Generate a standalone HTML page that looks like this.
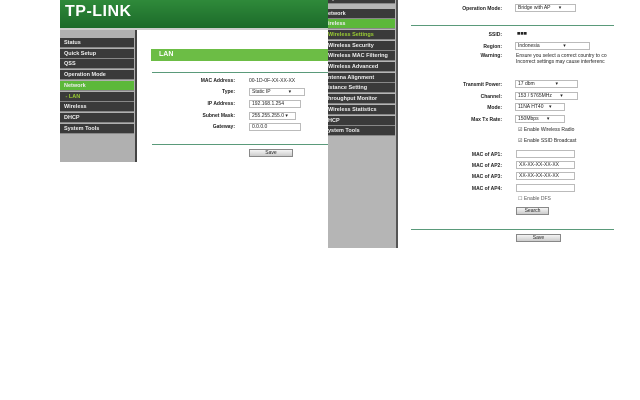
<!DOCTYPE html>
<html><head><style>
*{margin:0;padding:0;box-sizing:border-box}
body{width:640px;height:400px;background:#fff;position:relative;overflow:hidden;font-family:"Liberation Sans",sans-serif;font-size:5.5px;color:#222}
.a{position:absolute}
.mi{position:absolute;left:0;height:10px;background:#3a3a3a;color:#eee;font-weight:bold;padding-left:4px;line-height:10px;border-bottom:1px solid #888;font-size:5.5px}
.lb{position:absolute;text-align:right;font-weight:bold;font-size:5px}
.fd{position:absolute;height:8px;border:1px solid #bbb;background:#fff;font-size:5px;line-height:6px;padding-left:2px}
.btn{position:absolute;height:8px;border:1px solid #888;background:linear-gradient(#f4f4f4,#ccc);font-size:5px;text-align:center;line-height:6px}
.hl{position:absolute;height:1px;background:#5a9a7a}
</style></head><body>
<!-- left screenshot -->
<div class="a" style="left:60px;top:0;width:270px;height:28px;background:linear-gradient(#2f8a3a,#1c6a2a)"></div>
<div class="a" style="left:65px;top:3px;color:#fff;font-weight:900;font-size:16px;letter-spacing:0.5px">TP-LINK</div>
<div class="a" style="left:60px;top:28px;width:270px;height:2px;background:#ccc"></div>
<div class="a" style="left:60px;top:30px;width:75px;height:132px;background:#b0b0b0"></div>
<div class="a" style="left:135px;top:30px;width:2px;height:132px;background:#444"></div>
<div class="a" style="left:60px;top:38px;width:75px;height:100px">
<div class="mi" style="top:0;width:74px">Status</div>
<div class="mi" style="top:10.7px;width:74px">Quick Setup</div>
<div class="mi" style="top:21.4px;width:74px">QSS</div>
<div class="mi" style="top:32.1px;width:74px">Operation Mode</div>
<div class="mi" style="top:42.8px;width:74px;background:#5cb83a">Network</div>
<div class="mi" style="top:53.5px;width:74px;color:#9c3">&nbsp;- LAN</div>
<div class="mi" style="top:64.2px;width:74px">Wireless</div>
<div class="mi" style="top:74.9px;width:74px">DHCP</div>
<div class="mi" style="top:85.6px;width:74px">System Tools</div>
</div>
<div class="a" style="left:151px;top:49px;width:179px;height:12px;background:#6cbd45;color:#fff;font-weight:bold;font-size:7px;line-height:12px;padding-left:8px">LAN</div>
<div class="hl" style="left:152px;top:72px;width:178px"></div>
<div class="lb" style="left:160px;top:78px;width:75px">MAC Address:</div>
<div class="a" style="left:249px;top:78px;font-size:5px">00-1D-0F-XX-XX-XX</div>
<div class="lb" style="left:160px;top:89px;width:75px">Type:</div>
<div class="fd" style="left:249px;top:88px;width:56px">Static IP &nbsp;&nbsp;&nbsp;&nbsp;&nbsp;&nbsp;&nbsp;&nbsp;&nbsp;&nbsp;&nbsp;&nbsp;▾</div>
<div class="lb" style="left:160px;top:101px;width:75px">IP Address:</div>
<div class="fd" style="left:249px;top:100px;width:52px">192.168.1.254</div>
<div class="lb" style="left:160px;top:113px;width:75px">Subnet Mask:</div>
<div class="fd" style="left:249px;top:112px;width:47px">255.255.255.0 ▾</div>
<div class="lb" style="left:160px;top:124px;width:75px">Gateway:</div>
<div class="fd" style="left:249px;top:123px;width:52px">0.0.0.0</div>
<div class="hl" style="left:152px;top:144px;width:178px"></div>
<div class="btn" style="left:249px;top:149px;width:44px">Save</div>
<!-- right screenshot -->
<div class="a" style="left:328px;top:0;width:68px;height:248px;background:#b5b5b5"></div>
<div class="a" style="left:396px;top:0;width:2px;height:248px;background:#555"></div>
<div class="a" style="left:328px;top:-2px;width:67px;height:140px">
<div class="mi" style="top:-4px;width:67px;padding-left:0">Operation Mode</div>
<div class="mi" style="top:10.5px;width:67px;padding-left:0">etwork</div>
<div class="mi" style="top:21.2px;width:67px;padding-left:0;background:#5cb83a">ireless</div>
<div class="mi" style="top:31.9px;width:67px;padding-left:0;color:#9c3">Wireless Settings</div>
<div class="mi" style="top:42.6px;width:67px;padding-left:0">Wireless Security</div>
<div class="mi" style="top:53.3px;width:67px;padding-left:0">Wireless MAC Filtering</div>
<div class="mi" style="top:64px;width:67px;padding-left:0">Wireless Advanced</div>
<div class="mi" style="top:74.7px;width:67px;padding-left:0">ntenna Alignment</div>
<div class="mi" style="top:85.4px;width:67px;padding-left:0">istance Setting</div>
<div class="mi" style="top:96.1px;width:67px;padding-left:0">hroughput Monitor</div>
<div class="mi" style="top:106.8px;width:67px;padding-left:0">Wireless Statistics</div>
<div class="mi" style="top:117.5px;width:67px;padding-left:0">HCP</div>
<div class="mi" style="top:128.2px;width:67px;padding-left:0">ystem Tools</div>
</div>
<div class="lb" style="left:420px;top:6px;width:82px">Operation Mode:</div>
<div class="fd" style="left:515px;top:4px;width:61px">Bridge with AP &nbsp;&nbsp;&nbsp;&nbsp;&nbsp;▾</div>
<div class="hl" style="left:411px;top:25px;width:203px"></div>
<div class="lb" style="left:420px;top:32px;width:82px">SSID:</div>
<div class="a" style="left:517px;top:31px;font-weight:bold">■■■</div>
<div class="lb" style="left:420px;top:44px;width:82px">Region:</div>
<div class="fd" style="left:515px;top:42px;width:75px">Indonesia &nbsp;&nbsp;&nbsp;&nbsp;&nbsp;&nbsp;&nbsp;&nbsp;&nbsp;&nbsp;&nbsp;&nbsp;&nbsp;&nbsp;&nbsp;&nbsp;▾</div>
<div class="lb" style="left:420px;top:53px;width:82px">Warning:</div>
<div class="a" style="left:516px;top:53px;width:98px;overflow:hidden;white-space:nowrap;line-height:6px;font-size:5px">Ensure you select a correct country to co<br>Incorrect settings may cause interferenc</div>
<div class="lb" style="left:420px;top:82px;width:82px">Transmit Power:</div>
<div class="fd" style="left:515px;top:80px;width:63px">17 dbm &nbsp;&nbsp;&nbsp;&nbsp;&nbsp;&nbsp;&nbsp;&nbsp;&nbsp;&nbsp;&nbsp;&nbsp;&nbsp;&nbsp;▾</div>
<div class="lb" style="left:420px;top:94px;width:82px">Channel:</div>
<div class="fd" style="left:515px;top:92px;width:63px">153 / 5765MHz &nbsp;&nbsp;&nbsp;&nbsp;&nbsp;▾</div>
<div class="lb" style="left:420px;top:105px;width:82px">Mode:</div>
<div class="fd" style="left:515px;top:103px;width:50px">11NA HT40 &nbsp;&nbsp;&nbsp;▾</div>
<div class="lb" style="left:420px;top:117px;width:82px">Max Tx Rate:</div>
<div class="fd" style="left:515px;top:115px;width:50px">150Mbps &nbsp;&nbsp;&nbsp;&nbsp;&nbsp;▾</div>
<div class="a" style="left:518px;top:127px;font-size:5px">☑ Enable Wireless Radio</div>
<div class="a" style="left:518px;top:138px;font-size:5px">☑ Enable SSID Broadcast</div>
<div class="lb" style="left:420px;top:152px;width:82px">MAC of AP1:</div>
<div class="fd" style="left:516px;top:150px;width:59px"></div>
<div class="lb" style="left:420px;top:163px;width:82px">MAC of AP2:</div>
<div class="fd" style="left:516px;top:161px;width:59px">XX-XX-XX-XX-XX</div>
<div class="lb" style="left:420px;top:174px;width:82px">MAC of AP3:</div>
<div class="fd" style="left:516px;top:172px;width:59px">XX-XX-XX-XX-XX</div>
<div class="lb" style="left:420px;top:186px;width:82px">MAC of AP4:</div>
<div class="fd" style="left:516px;top:184px;width:59px"></div>
<div class="a" style="left:518px;top:196px;font-size:5px;color:#555">☐ Enable DFS</div>
<div class="btn" style="left:516px;top:207px;width:33px">Search</div>
<div class="hl" style="left:411px;top:229px;width:203px"></div>
<div class="btn" style="left:516px;top:234px;width:45px">Save</div>
</body></html>
